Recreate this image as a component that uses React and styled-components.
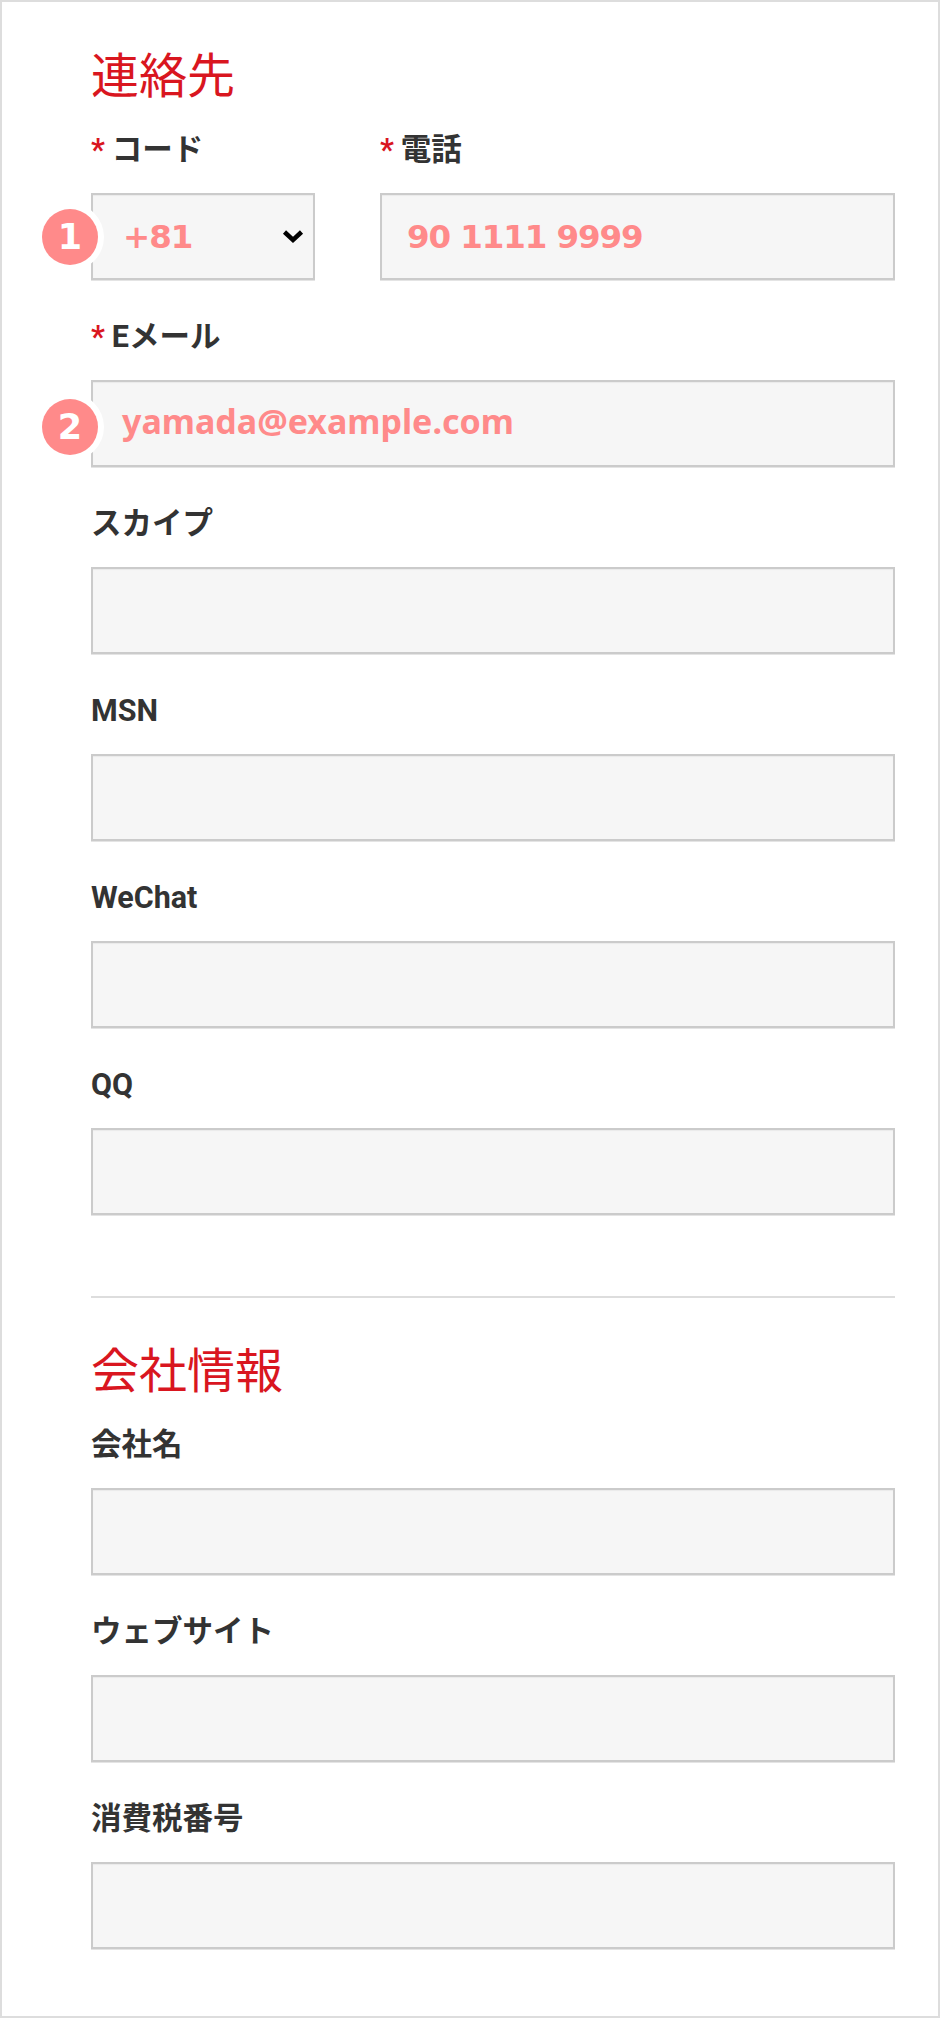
import React from 'react';
import styled, { createGlobalStyle } from 'styled-components';

const GlobalStyle = createGlobalStyle`
  html, body {
    margin: 0;
    padding: 0;
    background: #fff;
  }
  * {
    box-sizing: border-box;
  }
`

const JP = `Roboto, "Noto Sans CJK JP", sans-serif`

const Page = styled.div`
  width: 940px;
  height: 2018px;
  border: 2px solid #ddd;
  padding: 46px 43px 0 89px;
  font-family: ${JP};
  background: #fff;
`
const Heading = styled.h2`
  margin: 0 0 24px;
  font-size: 48px;
  line-height: 58px;
  height: 56px;
  font-weight: 400;
  color: #d9161f;
`
const Row = styled.div`
  display: grid;
  grid-template-columns: 224px 1fr;
  column-gap: 65px;
`
const Group = styled.div`
  margin-bottom: 35px;
`
const Label = styled.div`
  height: 40px;
  margin-bottom: 25px;
  font-size: 30.5px;
  line-height: 44px;
  font-weight: 700;
  color: #333;
`
const Star = styled.span`
  color: #d9161f;
  margin-right: 7px;
`
const Field = styled.div`
  position: relative;
  display: flex;
  align-items: center;
  justify-content: space-between;
  height: 87px;
  padding: 0 9px ${p => p.$lift || 0}px ${p => p.$pad || 29}px;
  background: #f6f6f6;
  border: 2px solid #cbcbcb;
  box-shadow: inset 0 1px 1px rgba(0, 0, 0, 0.05), 0 1px 0 #e4e4e4;
  font-family: ${p => (p.$digits ? '"DejaVu Sans"' : '"Noto Sans"')}, "Noto Sans CJK JP", sans-serif;
  font-size: ${p => (p.$digits ? 32.5 : 34)}px;
  letter-spacing: ${p => (p.$digits ? -1.1 : 0)}px;
  font-weight: 700;
  color: #ff8a8a;
`
const Badge = styled.span`
  position: absolute;
  left: -51px;
  top: 50%;
  width: 56px;
  height: 56px;
  margin-top: ${p => p.$shift || -28}px;
  display: flex;
  align-items: center;
  justify-content: center;
  border-radius: 50%;
  background: #ff8a8a;
  box-shadow: 0 0 0 6px #fff;
  color: #fff;
  font-family: "DejaVu Sans", sans-serif;
  font-size: 35px;
  letter-spacing: 0;
  font-weight: 700;
`
const Divider = styled.hr`
  height: 2px;
  margin: 81px 0 45px;
  border: 0;
  background: #ddd;
`

const Chevron = () => (
  <svg width="22" height="15" viewBox="0 0 22 15">
    <polyline points="2.5,3 11,11 19.5,3" fill="none" stroke="#000" strokeWidth="4.5" />
  </svg>
)

const TextGroup = ({ label }) => (
  <Group>
    <Label>{label}</Label>
    <Field />
  </Group>
)

const App = () => (
  <>
    <GlobalStyle />
    <Page>
      <Heading>連絡先</Heading>
      <Row>
        <Group>
          <Label><Star>*</Star>コード</Label>
          <Field $digits $pad={30}>
            <Badge>1</Badge>
            +81
            <Chevron />
          </Field>
        </Group>
        <Group>
          <Label><Star>*</Star>電話</Label>
          <Field $digits $pad={25}>90 1111 9999</Field>
        </Group>
      </Row>
      <Group>
        <Label><Star>*</Star>Eメール</Label>
        <Field $lift={6}>
          <Badge $shift={-25}>2</Badge>
          yamada@example.com
        </Field>
      </Group>
      <TextGroup label="スカイプ" />
      <TextGroup label="MSN" />
      <TextGroup label="WeChat" />
      <TextGroup label="QQ" />
      <Divider />
      <Heading>会社情報</Heading>
      <TextGroup label="会社名" />
      <TextGroup label="ウェブサイト" />
      <TextGroup label="消費税番号" />
    </Page>
  </>
)

export default App
